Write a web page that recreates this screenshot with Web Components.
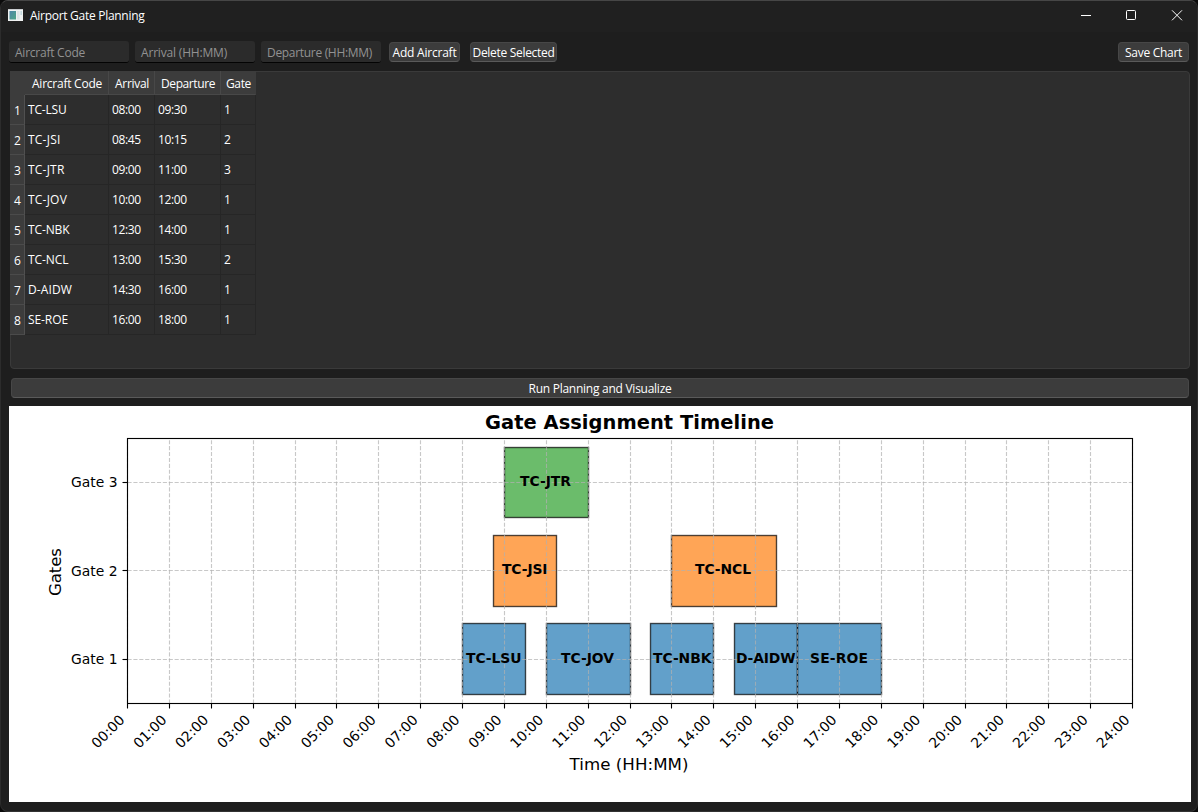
<!DOCTYPE html>
<html lang="en">
<head>
<meta charset="utf-8">
<title>Airport Gate Planning</title>
<style>
html, body { margin: 0; height: 100%; background: #0b0b0b; overflow: hidden; }
</style>
</head>
<body>
<gate-app></gate-app>
<script>
const define = (name, html, setup) => {
  const t = document.createElement('template');
  t.innerHTML = html;
  customElements.define(name, class extends HTMLElement {
    connectedCallback() {
      if (this.shadowRoot) return;
      this.attachShadow({ mode: 'open' }).append(t.content.cloneNode(true));
      if (setup) setup(this, this.shadowRoot);
    }
  });
};

/* Label whose tracking is tuned to a fixed advance width (attribute w). */
define('fit-text', `<style>
  :host { display: inline-block; white-space: pre; flex: none; line-height: 16px; }
  span { display: inline-block; }
</style><span><slot></slot></span>`, (el, root) => {
  const w = +el.getAttribute('w'), s = root.querySelector('span');
  const n = el.textContent.length;
  const nat = s.getBoundingClientRect().width;
  s.style.letterSpacing = ((w - nat) / n).toFixed(3) + 'px';
  el.style.width = w + 'px';
});

define('title-bar', `<style>
  :host { display: flex; align-items: center; height: 31px; background: #202020; padding: 0 0 3px 8px; box-sizing: border-box; }
  .app { width: 16px; height: 16px; margin-right: 6px; }
  .gap { flex: 1; }
  ::slotted(*) { padding-top: 2px; }
  .ctl { width: 45.5px; height: 30px; flex: none; }
  .ctl:last-child { width: 43.5px; }
</style>
<svg class="app" viewBox="0 0 16 16">
  <defs><linearGradient id="g" x1="0" y1="0" x2="1" y2="1"><stop offset="0" stop-color="#4f86a8"/><stop offset="1" stop-color="#4fa585"/></linearGradient></defs>
  <rect x="0" y="2" width="15" height="12" fill="#f0f2f2"/>
  <rect x="0" y="2" width="15" height="1" fill="#c9cdd0"/>
  <rect x="1.5" y="4" width="6.5" height="8.5" fill="url(#g)"/>
  <rect x="9" y="4" width="2.6" height="8.5" fill="#dfe5e6"/>
  <rect x="12.4" y="4" width="1.6" height="4" fill="#c3d9de"/>
</svg>
<slot></slot><span class="gap"></span>
<svg class="ctl" viewBox="0 0 45.5 30"><path d="M17 15.5h10" stroke="#fff" fill="none"/></svg>
<svg class="ctl" viewBox="0 0 45.5 30"><rect x="17.5" y="10.5" width="9" height="9" rx="1" stroke="#fff" fill="none"/></svg>
<svg class="ctl" viewBox="0 0 43.5 30"><path d="M17 10.3l10 10M27 10.3l-10 10" stroke="#fff" fill="none"/></svg>`);

define('line-input', `<style>
  :host { display: flex; align-items: center; width: 120px; height: 22px; box-sizing: border-box; padding: 2px 0 0 6px;
    background: #2b2b2b; border-bottom: 1px solid #030303; border-radius: 3px; color: #929292; }
</style><slot></slot>`);

define('push-button', `<style>
  :host { display: flex; align-items: center; justify-content: center; height: 20px; box-sizing: border-box; padding-top: 1px;
    background: #3c3c3c; border: 1px solid #474747; border-bottom-color: #5a5a5a; border-radius: 4px; color: #fff; }
</style><slot></slot>`);

define('tool-row', `<style>
  :host { display: flex; align-items: center; height: 22px; padding: 0 9px; gap: 6px; }
  .b1 { width: 71px; margin-left: 2px; } .b2 { width: 87px; margin-left: 4px; } .b3 { width: 71px; margin-left: auto; }
  .b1, .b2, .b3 { margin-top: -1px; padding-top: 2px; }
</style>
<line-input><fit-text w="70">Aircraft Code</fit-text></line-input>
<line-input><fit-text w="86">Arrival (HH:MM)</fit-text></line-input>
<line-input><fit-text w="105">Departure (HH:MM)</fit-text></line-input>
<push-button class="b1"><fit-text w="64">Add Aircraft</fit-text></push-button>
<push-button class="b2"><fit-text w="82">Delete Selected</fit-text></push-button>
<push-button class="b3"><fit-text w="57">Save Chart</fit-text></push-button>`);

define('flight-table', `<style>
  :host { display: block; height: 298px; box-sizing: border-box; background: #2d2d2d; border: 1px solid #3a3a3a; border-radius: 4px; }
  .grid { display: grid; width: 246px; margin: -1px 0 0 -1px; grid-template-columns: 15px 84px 46px 66px 35px; grid-template-rows: 24px; grid-auto-rows: 30px; }
  .grid > div { box-sizing: border-box; display: flex; align-items: center; }
  .h { background: #3c3c3c; border-right: 1px solid #484848; border-bottom: 1px solid #484848; justify-content: center; padding: 3px 0 0 1px; }
  .h.k { border-color: #3c3c3c; }
  .h.e { border-right-color: #3c3c3c; }
  .n { background: #3c3c3c; border-right: 1px solid #505050; border-bottom: 1px solid #4b4b4b; padding: 3px 0 0 4px; }
  .d { border-right: 1px solid #262626; border-bottom: 1px solid #262626; padding-left: 3px; }
</style><div class="grid"></div>`, (el, root) => {
  const g = root.querySelector('.grid');
  const cell = (cls, text, w) => `<div class="${cls}">${text ? `<fit-text w="${w}">${text}</fit-text>` : ''}</div>`;
  const rows = [['TC-LSU',38.5,'08:00','09:30',1],['TC-JSI',32.5,'08:45','10:15',2],['TC-JTR',36.5,'09:00','11:00',3],
    ['TC-JOV',39,'10:00','12:00',1],['TC-NBK',41.5,'12:30','14:00',1],['TC-NCL',40.5,'13:00','15:30',2],
    ['D-AIDW',44,'14:30','16:00',1],['SE-ROE',40,'16:00','18:00',1]];
  g.innerHTML = cell('h k') + cell('h', 'Aircraft Code', 70) + cell('h', 'Arrival', 34) + cell('h', 'Departure', 54) + cell('h e', 'Gate', 25) +
    rows.map((r, i) => cell('n', String(i + 1), 6.5) + cell('d', r[0], r[1]) + cell('d', r[2], 28.6) + cell('d', r[3], 28.6) + cell('d', String(r[4]), 6.5)).join('');
});

define('gate-chart', `<style>
  :host { display: block; height: 396px; background: #fff; }
  svg { display: block; font-family: "DejaVu Sans", sans-serif; font-size: 13.89px; }
</style><svg width="1182" height="396" viewBox="9 406 1182 396"></svg>`, (el, root) => {
  const X = h => Math.floor(127.5 + 41.875 * h) + 0.5;
  const gateY = { 1: 659.5, 2: 570.5, 3: 482.5 };
  const span = { 1: [623.5, 694.5], 2: [535.5, 606.5], 3: [447.5, 517.5] };
  const fill = { 1: '#1f77b4', 2: '#ff7f0e', 3: '#2ca02c' };
  const bars = [['TC-LSU',1,8,9.5,466,55.5],['TC-JSI',2,8.75,10.25,502,45.5],['TC-JTR',3,9,11,520,51],['TC-JOV',1,10,12,561,53],
    ['TC-NBK',1,12.5,14,653,58.5],['TC-NCL',2,13,15.5,695,56],['D-AIDW',1,14.5,16,736,59.5],['SE-ROE',1,16,18,810,58]];
  let s = '';
  for (const [, g, a, b] of bars) {
    const [t, u] = span[g];
    s += `<rect x="${X(a)}" y="${t}" width="${X(b) - X(a)}" height="${u - t}" fill="${fill[g]}" stroke="#000" stroke-width="1.39" fill-opacity=".7" stroke-opacity=".7"/>`;
  }
  const gridStyle = 'stroke="#b0b0b0" stroke-opacity=".7" stroke-width="1.11" stroke-dasharray="4.11 1.78"';
  for (let h = 0; h <= 24; h++) s += `<path d="M${X(h)} 703.5V438.5" ${gridStyle}/>`;
  for (const g of [1, 2, 3]) s += `<path d="M127.5 ${gateY[g]}H1132.5" ${gridStyle}/><path d="M122.5 ${gateY[g]}H127.5" stroke="#000" stroke-width="1.11"/>
    <text x="71" y="${{ 1: 664, 2: 576, 3: 487 }[g]}" textLength="46.5">Gate ${g}</text>`;
  for (let h = 0; h <= 24; h++) s += `<path d="M${X(h)} 703.5v5" stroke="#000" stroke-width="1.11"/>
    <text text-anchor="end" transform="translate(${127.2 + 41.875 * h - 1.6} 720.8) rotate(-45)">${String(h).padStart(2, '0')}:00</text>`;
  s += '<rect x="127.5" y="438.5" width="1005" height="265" fill="none" stroke="#000" stroke-width="1.11"/>';
  for (const [n, g, , , x, w] of bars) s += `<text x="${x}" y="${{1: 663, 2: 574, 3: 486}[g]}" font-weight="700" textLength="${w}">${n}</text>`;
  s += `<text x="485" y="429" font-weight="700" font-size="19.44" textLength="289">Gate Assignment Timeline</text>
    <text x="569.5" y="770" font-size="16.67" textLength="119">Time (HH:MM)</text>
    <text transform="translate(61 596) rotate(-90)" font-size="16.67" textLength="48">Gates</text>`;
  root.querySelector('svg').innerHTML = s;
});

define('gate-app', `<style>
  :host { display: flex; flex-direction: column; width: 1198px; height: 812px; box-sizing: border-box; overflow: hidden;
    background: #1e1e1e; border: 1px solid #3a3a3a; border-color: #464646 #2c2c2c #333 #2c2c2c; border-radius: 8px;
    font: 12px/16px "Open Sans", "Noto Sans", sans-serif; color: #fff; }
  main { display: flex; flex-direction: column; margin: 0 -1px; }
  title-bar { margin: 0 -1px; }
  tool-row { margin-top: 9px; }
  flight-table { margin: 8px 8px 0 10px; }
  .run { margin: 9px 9px 0 11px; }
  gate-chart { margin: 8px 7px 0 9px; }
</style>
<title-bar><fit-text w="114.5">Airport Gate Planning</fit-text></title-bar>
<main>
  <tool-row></tool-row>
  <flight-table></flight-table>
  <push-button class="run"><fit-text w="143">Run Planning and Visualize</fit-text></push-button>
  <gate-chart></gate-chart>
</main>`);
</script>
</body>
</html>
